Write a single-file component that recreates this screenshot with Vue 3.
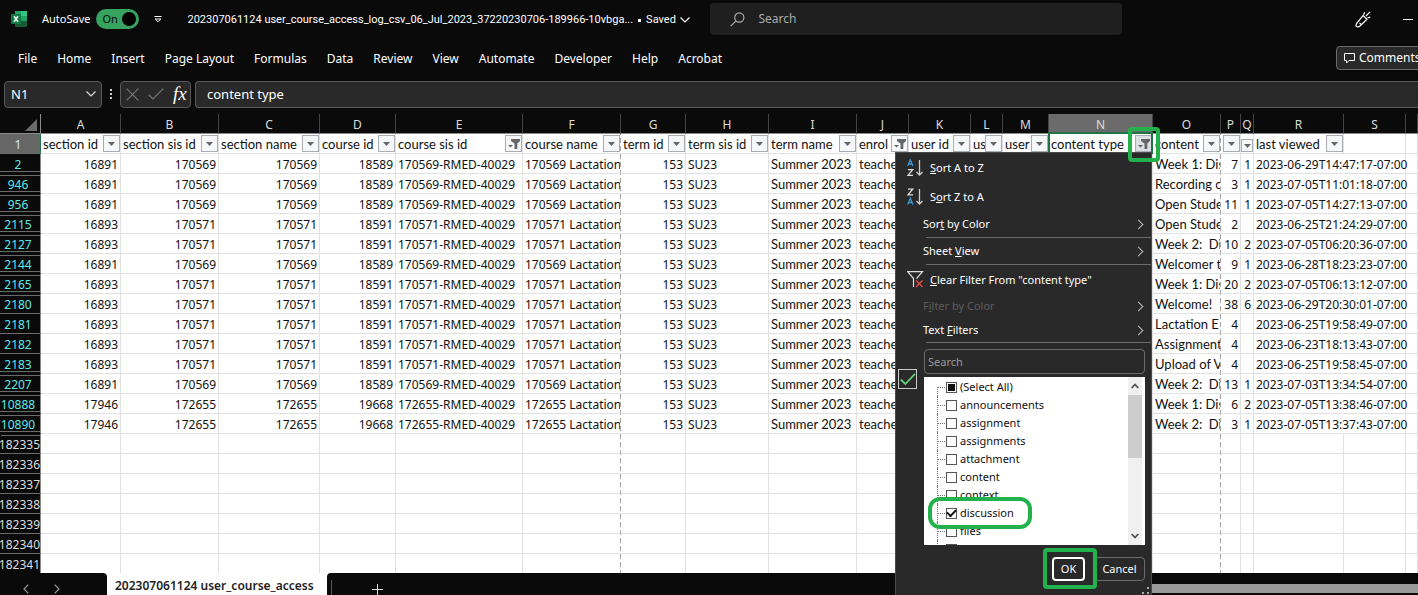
<script setup>
import { ref } from 'vue'

const tabs = ['File', 'Home', 'Insert', 'Page Layout', 'Formulas', 'Data', 'Review', 'View', 'Automate', 'Developer', 'Help', 'Acrobat']

const columns = [
  { id: 'A', label: 'section id', menu: 'arrow', num: true },
  { id: 'B', label: 'section sis id', menu: 'arrow', num: true },
  { id: 'C', label: 'section name', menu: 'arrow', num: true },
  { id: 'D', label: 'course id', menu: 'arrow', num: true },
  { id: 'E', label: 'course sis id', menu: 'filter', code: true },
  { id: 'F', label: 'course name', menu: 'arrow', code: true },
  { id: 'G', label: 'term id', menu: 'arrow', num: true },
  { id: 'H', label: 'term sis id', menu: 'arrow', code: true },
  { id: 'I', label: 'term name', menu: 'arrow' },
  { id: 'J', label: 'enrol', menu: 'filter' },
  { id: 'K', label: 'user id', menu: 'arrow', num: true },
  { id: 'L', label: 'us', menu: 'arrow' },
  { id: 'M', label: 'user', menu: 'arrow' },
  { id: 'N', label: 'content type', menu: 'filter' },
  { id: 'O', label: 'content', menu: 'arrow' },
  { id: 'P', label: 't', menu: 'arrow', num: true },
  { id: 'Q', label: '', menu: 'arrow', num: true },
  { id: 'R', label: 'last viewed', menu: 'arrow', code: true },
  { id: 'S', label: '' },
  { id: 'T', label: '' },
]

const a = ['16891', '170569', '18589', '170569-RMED-40029', '170569 Lactation']
const b = ['16893', '170571', '18591', '170571-RMED-40029', '170571 Lactation']
const c = ['17946', '172655', '19668', '172655-RMED-40029', '172655 Lactation']

const records = [
  ['2', a, 'Week 1: Dis', '7', '1', '2023-06-29T14:47:17-07:00', true],
  ['946', a, 'Recording o', '3', '1', '2023-07-05T11:01:18-07:00', true],
  ['956', a, 'Open Stude', '11', '1', '2023-07-05T14:27:13-07:00', true],
  ['2115', b, 'Open Stude', '2', '', '2023-06-25T21:24:29-07:00', true],
  ['2127', b, 'Week 2:\u00a0 Di', '10', '2', '2023-07-05T06:20:36-07:00', true],
  ['2144', a, 'Welcomer t', '9', '1', '2023-06-28T18:23:23-07:00', true],
  ['2165', b, 'Week 1: Dis', '20', '2', '2023-07-05T06:13:12-07:00', true],
  ['2180', b, 'Welcome!', '38', '6', '2023-06-29T20:30:01-07:00', false],
  ['2181', b, 'Lactation E', '4', '', '2023-06-25T19:58:49-07:00', false],
  ['2182', b, 'Assignment', '4', '', '2023-06-23T18:13:43-07:00', false],
  ['2183', b, 'Upload of V', '4', '', '2023-06-25T19:58:45-07:00', true],
  ['2207', a, 'Week 2:\u00a0 Di', '13', '1', '2023-07-03T13:34:54-07:00', true],
  ['10888', c, 'Week 1: Dis', '6', '2', '2023-07-05T13:38:46-07:00', true],
  ['10890', c, 'Week 2:\u00a0 Di', '3', '1', '2023-07-05T13:37:43-07:00', true],
]

const rows = records.map(([n, s, title, p, q, viewed, gap], i) => ({
  n,
  gap,
  afterGap: i > 0 && records[i - 1][6],
  cells: [s[0], s[1], s[1], s[2], s[3], s[4], '153', 'SU23', 'Summer 2023', 'teache', '', '', '', '', title, p, q, viewed, '', ''],
}))

const emptyRows = ['182335', '182336', '182337', '182338', '182339', '182340', '182341']

const autosave = ref(true)
const options = ref([
  { label: '(Select All)', on: false, mixed: true },
  { label: 'announcements', on: false },
  { label: 'assignment', on: false },
  { label: 'assignments', on: false },
  { label: 'attachment', on: false },
  { label: 'content', on: false },
  { label: 'context', on: false },
  { label: 'discussion', on: true },
  { label: 'files', on: false },
  { label: '', on: false },
])
</script>

<template>
  <div class="app">
    <header class="titlebar">
      <svg class="logo" width="16" height="16" viewBox="0 0 16 16" aria-hidden="true">
        <rect x="4" y="0" width="12" height="16" rx="1" fill="#185c37" />
        <rect x="4" y="0" width="6" height="5" fill="#21a366" />
        <rect x="10" y="0" width="6" height="5" fill="#33c481" />
        <rect x="4" y="5" width="6" height="5" fill="#107c41" />
        <rect x="10" y="5" width="6" height="5" fill="#21a366" />
        <rect x="0" y="3" width="10" height="10" rx="1" fill="#107c41" />
        <path d="M3 5.3 L7 10.7 M7 5.3 L3 10.7" stroke="#fff" stroke-width="1.5" />
      </svg>
      <label class="autosave">
        <span>AutoSave</span>
        <span class="switch"><input v-model="autosave" type="checkbox" /><span class="on">On</span><span class="knob"></span></span>
      </label>
      <button class="plain customize" aria-label="Customize Quick Access Toolbar">
        <svg width="8" height="8" viewBox="0 0 8 8"><path d="M0.5 1.5 H7.5" stroke="#fff" /><path d="M1.2 4 L4 6.8 L6.8 4 Z" fill="none" stroke="#fff" /></svg>
      </button>
      <button class="plain filename">
        <span>202307061124 user_course_access_log_csv_06_Jul_2023_37220230706-189966-10vbga...</span>
        <span class="bullet"></span>
        <span>Saved</span>
        <svg width="10" height="6" viewBox="0 0 10 6"><path d="M0.5 0.5 L5 5 L9.5 0.5" fill="none" stroke="#fff" stroke-width="1.2" /></svg>
      </button>
      <label class="search">
        <svg width="15" height="15" viewBox="0 0 15 15"><circle cx="9.3" cy="5.5" r="4.6" fill="none" stroke="#aaa" stroke-width="1.2" /><path d="M6 8.8 L0.7 14.2" stroke="#aaa" stroke-width="1.2" /></svg>
        <input type="text" placeholder="Search" aria-label="Search" />
      </label>
      <button class="plain pen" aria-label="What's new">
        <svg width="16" height="17" viewBox="0 0 16 17" fill="none" stroke="#fff" stroke-width="1.2">
          <path d="M8 4.5 L12 8.2 L5 15 C3.6 16.2 1.6 16 0.9 15 L1.5 12.5 Z" />
          <path d="M4.5 12 L6.5 13.7" />
          <path d="M8.6 3.8 L9.6 1.2 M11 5 L15 0.8 M12.4 7 L15.3 6.2" />
        </svg>
      </button>
      <button class="plain minimize" aria-label="Minimize"></button>
    </header>

    <nav class="ribbon">
      <button v-for="tab in tabs" :key="tab" class="plain tab">{{ tab }}</button>
      <button class="comments">
        <svg width="11" height="11" viewBox="0 0 11 11"><path d="M0.5 0.5 H10.5 V7.5 H5 L2.5 10 V7.5 H0.5 Z" fill="none" stroke="#fff" /></svg>
        <span>Comments</span>
      </button>
    </nav>

    <div class="formula">
      <button class="box namebox">
        <span>N1</span>
        <svg width="10" height="6" viewBox="0 0 10 6"><path d="M0.5 0.5 L5 5 L9.5 0.5" fill="none" stroke="#ddd" stroke-width="1.2" /></svg>
      </button>
      <svg class="grip" width="2" height="11" viewBox="0 0 2 11" fill="#ccc"><path d="M0 0h2v2H0zM0 4h2v2H0zM0 8h2v2H0z" /></svg>
      <div class="box tools">
        <button class="plain" aria-label="Cancel entry"><svg width="13" height="13" viewBox="0 0 13 13"><path d="M0.7 0.7 L12.3 12.3 M12.3 0.7 L0.7 12.3" stroke="#777" stroke-width="1.2" /></svg></button>
        <button class="plain" aria-label="Enter"><svg width="16" height="12" viewBox="0 0 16 12"><path d="M0.7 6.8 L5 11 L15.3 0.7" fill="none" stroke="#777" stroke-width="1.2" /></svg></button>
        <button class="plain fx" aria-label="Insert function">fx</button>
      </div>
      <input class="box entry" type="text" value="content type" aria-label="Formula bar" />
    </div>

    <main class="sheet">
      <table>
        <colgroup>
          <col class="w-head" />
          <col v-for="col in columns" :key="col.id" :class="['w-' + col.id, { pagebreak: col.id === 'F' || col.id === 'O' }]" />
        </colgroup>
        <thead>
          <tr>
            <th class="corner"><svg width="12" height="12" viewBox="0 0 12 12"><path d="M12 0 V12 H0 Z" fill="#6b6b6b" /></svg></th>
            <th v-for="col in columns" :key="col.id" class="letter" :class="{ picked: col.id === 'N' }">{{ col.id === 'T' ? '' : col.id }}</th>
          </tr>
        </thead>
        <tbody>
          <tr>
            <th class="rowhead current">1</th>
            <td v-for="col in columns" :key="col.id" class="field" :class="{ active: col.id === 'N', broken: col.id === 'F' || col.id === 'O' }">
              <div class="field-row">
                <span class="field-label">{{ col.label }}</span>
                <button v-if="col.menu" class="drop" :class="{ small: col.id === 'Q' }" :aria-label="'Filter ' + col.label">
                  <svg v-if="col.menu === 'arrow'" width="7" height="4" viewBox="0 0 7 4"><path d="M0 0 H7 L3.5 4 Z" fill="#666" /></svg>
                  <svg v-else width="12" height="10" viewBox="0 0 12 10" fill="#666"><path d="M3 0 H12 V2 L9.3 4.5 V10 H6.5 V4.5 L3 2 Z" /><path d="M0 6 H5 L2.5 8.6 Z" /></svg>
                </button>
              </div>

              <template v-if="col.id === 'N'">
                <span class="cell-outline"></span>
                <span class="mark mark-filter"></span>
                <section class="menu" aria-label="Column filter">
                  <button class="item tall">
                    <svg width="17" height="18" viewBox="0 0 17 18" fill="none" stroke-width="1.3">
                      <path d="M0.7 7 L3.3 0.8 L5.9 7 M1.6 5 H5" stroke="#3a96dd" />
                      <path d="M1 10.7 H5.7 L1 16.3 H6" stroke="#ddd" />
                      <path d="M12.5 1 V16 M9.5 13 L12.5 16 L15.5 13" stroke="#ccc" />
                    </svg>
                    <span><u>S</u>ort A to Z</span>
                  </button>
                  <button class="item tall">
                    <svg width="17" height="18" viewBox="0 0 17 18" fill="none" stroke-width="1.3">
                      <path d="M1 1.2 H5.7 L1 6.8 H6" stroke="#ddd" />
                      <path d="M0.7 16.5 L3.3 10.3 L5.9 16.5 M1.6 14.5 H5" stroke="#3a96dd" />
                      <path d="M12.5 1 V16 M9.5 13 L12.5 16 L15.5 13" stroke="#ccc" />
                    </svg>
                    <span>S<u>o</u>rt Z to A</span>
                  </button>
                  <button class="item sub"><span>Sor<u>t</u> by Color</span><i class="chev"></i></button>
                  <hr />
                  <button class="item sub"><span>Sheet <u>V</u>iew</span><i class="chev"></i></button>
                  <hr />
                  <button class="item tall">
                    <svg width="17" height="17" viewBox="0 0 17 17" fill="none">
                      <path d="M6.5 16 V7.5 L0.7 0.7 H15.5 L10 7 V8" stroke="#ddd" stroke-width="1.2" />
                      <path d="M9 9.5 L15.5 16 M15.5 9.5 L9 16" stroke="#e0504c" stroke-width="1.3" />
                    </svg>
                    <span><u>C</u>lear Filter From "content type"</span>
                  </button>
                  <button class="item sub short" disabled><span>F<u>i</u>lter by Color</span><i class="chev"></i></button>
                  <button class="item sub short"><span>Text <u>F</u>ilters</span><i class="chev"></i></button>
                  <hr />
                  <div class="values">
                    <span class="checked-icon"><svg width="16" height="13" viewBox="0 0 16 13"><path d="M0.8 6.5 L5.3 11 L15 0.9" fill="none" stroke="#5fd07a" stroke-width="1.8" /></svg></span>
                    <input class="find" type="text" placeholder="Search" aria-label="Search values" />
                    <div class="listbox">
                      <ul>
                        <li v-for="o in options" :key="o.label">
                          <label><input v-model="o.on" type="checkbox" :class="{ mixed: o.mixed }" />{{ o.label }}</label>
                          <span v-if="o.label === 'discussion'" class="mark mark-option"></span>
                        </li>
                      </ul>
                      <div class="scroll">
                        <svg width="8" height="6" viewBox="0 0 8 6"><path d="M0.7 5 L4 1.5 L7.3 5" fill="none" stroke="#505050" stroke-width="1.8" /></svg>
                        <div class="thumb"></div>
                        <svg width="8" height="6" viewBox="0 0 8 6"><path d="M0.7 1 L4 4.5 L7.3 1" fill="none" stroke="#505050" stroke-width="1.8" /></svg>
                      </div>
                    </div>
                  </div>
                  <div class="actions">
                    <span class="ok-wrap"><button class="ok">OK</button><span class="mark mark-ok"></span></span>
                    <button class="cancel">Cancel</button>
                  </div>
                  <svg class="resize" width="8" height="8" viewBox="0 0 8 8" fill="#aaa"><path d="M5 0h2v2H5zM5 5h2v2H5zM0 5h2v2H0z" /></svg>
                </section>
              </template>
            </td>
          </tr>
          <tr v-for="row in rows" :key="row.n">
            <th class="rowhead filtered" :class="{ gap: row.gap, 'after-gap': row.afterGap }">{{ row.n }}</th>
            <td
              v-for="(cell, i) in row.cells"
              :key="i"
              :class="{ num: columns[i].num, code: columns[i].code, spill: columns[i].id === 'R', broken: columns[i].id === 'F' || columns[i].id === 'O' }"
            >{{ cell }}</td>
          </tr>
          <tr v-for="(n, i) in emptyRows" :key="n">
            <th class="rowhead long" :class="{ 'after-gap': i === 0 }">{{ n }}</th>
            <td v-for="col in columns" :key="col.id" :class="{ broken: col.id === 'F' || col.id === 'O' }"></td>
          </tr>
        </tbody>
      </table>
    </main>

    <footer class="sheetbar">
      <div class="nav">
        <button class="plain" aria-label="Previous sheet"><svg width="6" height="10" viewBox="0 0 6 10"><path d="M5.3 0.7 L1 5 L5.3 9.3" fill="none" stroke="#999" stroke-width="1.2" /></svg></button>
        <button class="plain" aria-label="Next sheet"><svg width="6" height="10" viewBox="0 0 6 10"><path d="M0.7 0.7 L5 5 L0.7 9.3" fill="none" stroke="#999" stroke-width="1.2" /></svg></button>
      </div>
      <button class="sheettab">202307061124 user_course_access</button>
      <div class="rest">
        <span class="divider"></span>
        <button class="plain add" aria-label="New sheet"><svg width="11" height="11" viewBox="0 0 11 11"><path d="M5.5 0 V11 M0 5.5 H11" stroke="#ddd" /></svg></button>
        <div class="hscroll"></div>
      </div>
    </footer>
  </div>
</template>

<style>
html,
body {
  margin: 0;
  background: #0a0a0a;
}
</style>

<style scoped>
.app {
  --ui: "Noto Sans", "Open Sans", sans-serif;
  --cell: Lato, "Noto Sans", sans-serif;
  display: flex;
  flex-direction: column;
  height: 100vh;
  overflow: hidden;
  background: #0a0a0a;
  color: #fff;
  font-family: var(--ui);
  font-size: 12px;
  line-height: 16px;
}
.app * {
  box-sizing: border-box;
}
button,
input {
  font: inherit;
  color: inherit;
  margin: 0;
}
svg {
  display: block;
  flex: none;
}
.plain {
  border: 0;
  padding: 0;
  background: none;
  white-space: nowrap;
}

.titlebar {
  display: flex;
  align-items: center;
  height: 38px;
  flex: none;
  padding-left: 11px;
}
.autosave {
  display: flex;
  align-items: center;
  gap: 6px;
  margin-left: 15px;
  font-size: 11px;
}
.switch {
  display: flex;
  align-items: center;
  justify-content: space-between;
  width: 43px;
  height: 20px;
  padding: 0 3px 0 6px;
  border-radius: 10px;
  background: #36a35f;
  color: #0a0a0a;
}
.switch input {
  appearance: none;
  position: absolute;
  width: 0;
  height: 0;
}
.knob {
  width: 14px;
  height: 14px;
  border-radius: 50%;
  background: #000;
}
.customize {
  margin-left: 15px;
}
.filename {
  display: flex;
  align-items: center;
  width: 490px;
  margin-left: 25px;
  padding-top: 1px;
  font-family: Roboto, sans-serif;
  font-size: 11px;
}
.bullet {
  flex: none;
  width: 3px;
  height: 3px;
  margin: 2px 5px 0;
  background: #fff;
}
.filename svg {
  margin-left: 4px;
}
.search {
  display: flex;
  align-items: center;
  gap: 13px;
  width: 412px;
  height: 32px;
  margin-left: 33px;
  padding-left: 20px;
  border-radius: 4px;
  background: #1f1f1f;
}
.search input {
  flex: 1;
  min-width: 0;
  border: 0;
  padding: 0;
  background: none;
}
.search input::placeholder {
  color: #aaa;
}
.pen {
  margin-left: auto;
}
.minimize {
  width: 10px;
  height: 1px;
  margin: 0 5px 0 32px;
  background: #fff;
}

.ribbon {
  display: flex;
  align-items: center;
  gap: 20px;
  height: 40px;
  flex: none;
  padding-left: 18px;
}
.tab {
  padding-top: 2px;
}
.comments {
  display: flex;
  align-items: center;
  gap: 4px;
  width: 90px;
  height: 24px;
  margin: 0 -8px 0 auto;
  padding: 0 7px;
  border: 1px solid #6b6b6b;
  border-radius: 4px;
  background: #292929;
}

.formula {
  display: flex;
  align-items: center;
  height: 36px;
  flex: none;
  padding: 3px 0 7px 4px;
  font-size: 13px;
}
.box {
  height: 27px;
  border: 1px solid #5a5a5a;
  border-radius: 4px;
  background: #292929;
}
.namebox {
  display: flex;
  align-items: center;
  justify-content: space-between;
  width: 98px;
  padding: 0 5px 0 6px;
}
.grip {
  margin: 0 8px;
}
.tools {
  display: flex;
  align-items: center;
  gap: 9px;
  width: 71px;
  padding-left: 5px;
}
.fx {
  font-family: "Liberation Serif", serif;
  font-style: italic;
  font-size: 19px;
}
.entry {
  flex: 1;
  min-width: 0;
  margin-left: 4px;
  padding: 0 11px;
  border-right: 0;
  border-radius: 4px 0 0 4px;
}

.sheet {
  flex: 1;
  min-height: 0;
  background: #fff;
}
table {
  width: 100%;
  table-layout: fixed;
  border-collapse: separate;
  border-spacing: 0;
  color: #111;
  font-family: var(--cell);
  font-size: 13px;
}
.w-head { width: 41px; }
.w-A { width: 80px; }
.w-B { width: 98px; }
.w-C { width: 101px; }
.w-D { width: 76px; }
.w-E { width: 127px; }
.w-F { width: 98px; }
.w-G { width: 65px; }
.w-H { width: 83px; }
.w-I { width: 88px; }
.w-J { width: 52px; }
.w-K { width: 62px; }
.w-L { width: 32px; }
.w-M { width: 46px; }
.w-N { width: 104px; }
.w-O { width: 68px; }
.w-P { width: 20px; }
.w-Q { width: 13px; }
.w-R { width: 90px; }
.w-S { width: 62px; }
.pagebreak {
  background: repeating-linear-gradient(#a6a6a6 0 5px, #fff 5px 8px) right / 1px 100% no-repeat;
}
th,
td {
  height: 20px;
  padding: 2px 2px 0;
  border-right: 1px solid #e1e1e1;
  border-bottom: 1px solid #e1e1e1;
  line-height: 17px;
  font-weight: 400;
  text-align: left;
  white-space: nowrap;
  overflow: hidden;
}
td.num,
td.code {
  font-family: var(--ui);
  font-size: 12px;
}
td.num {
  padding-right: 2px;
  text-align: right;
}
td.broken {
  border-right-color: transparent;
}
td.spill {
  overflow: visible;
  border-right-color: transparent;
}
.letter {
  padding: 1px 0 0;
  border-right-color: #444;
  border-bottom-color: #8a8a8a;
  background: #0a0a0a;
  color: #ddd;
  font-family: var(--ui);
  font-size: 12px;
  text-align: center;
}
.picked {
  background: #6b6b6b;
}
.corner {
  padding: 0 3px 2px 0;
  border-right-color: #8a8a8a;
  border-bottom-color: #8a8a8a;
  background: #0a0a0a;
  vertical-align: bottom;
}
.corner svg {
  margin-left: auto;
}
.rowhead {
  position: relative;
  padding: 2px 4px 0 0;
  border-right-color: #8a8a8a;
  border-bottom-color: #6b6b6b;
  background: #0a0a0a;
  color: #ddd;
  font-family: var(--ui);
  font-size: 12px;
  text-align: center;
}
.rowhead.long {
  padding: 2px 1px 0 0;
  direction: rtl;
}
.rowhead.current {
  border-right-color: #217346;
  background: #666;
  color: #cfeaff;
}
.rowhead.filtered {
  color: #5fe8e8;
}
.rowhead.gap {
  border-bottom-color: #0a0a0a;
}
.rowhead.gap::after,
.rowhead.after-gap::before {
  content: "";
  position: absolute;
  left: 0;
  right: 0;
  height: 1px;
  background: #6b6b6b;
}
.rowhead.gap::after {
  bottom: 1px;
}
.rowhead.after-gap::before {
  top: 1px;
}

.field {
  padding: 0 0 0 2px;
}
.field-row {
  display: flex;
  align-items: center;
  height: 19px;
}
.field-label {
  flex: 1 1 0;
  min-width: 0;
  padding-top: 2px;
  overflow: hidden;
}
.drop {
  display: flex;
  align-items: center;
  justify-content: center;
  flex: none;
  width: 17px;
  height: 17px;
  padding: 0;
  border: 1px solid #a9adb3;
  background: #f6f7f9;
}
.drop.small {
  align-self: flex-end;
  width: 12px;
  height: 13px;
  margin: 0 0 1px -2px;
}
.active {
  position: relative;
  overflow: visible;
}
.active .drop {
  background: #dcdfe4;
}
.cell-outline {
  position: absolute;
  inset: -2px -1px -1px -1px;
  border: 2px solid #217346;
  pointer-events: none;
}

.mark {
  position: absolute;
  z-index: 6;
  border: 4px solid #22b14c;
  pointer-events: none;
}
.mark-filter {
  top: -7px;
  right: -8px;
  width: 32px;
  height: 35px;
  border-radius: 4px;
}
.mark-option {
  top: -7px;
  left: 4px;
  width: 104px;
  height: 32px;
  border-radius: 12px;
}
.mark-ok {
  inset: -9px -12px -8px -9px;
  border-radius: 4px;
}

.menu {
  position: absolute;
  z-index: 5;
  top: 18px;
  right: 0;
  width: 257px;
  height: 446px;
  border: 1px solid #4a4a4a;
  background: #292929;
  color: #fff;
  font-family: var(--ui);
  font-size: 11px;
  line-height: 16px;
}
.item {
  display: flex;
  align-items: center;
  width: 100%;
  height: 26px;
  padding: 0 9px 0 27px;
  border: 0;
  background: none;
  text-align: left;
}
.item.tall {
  height: 29px;
  gap: 6px;
  padding-left: 11px;
}
.item.short {
  height: 24px;
}
.item:disabled {
  color: #5c5c5c;
}
.chev {
  width: 7px;
  height: 7px;
  margin-left: auto;
  border: solid #bbb;
  border-width: 1px 1px 0 0;
  transform: rotate(45deg);
}
hr {
  height: 1px;
  margin: 0 0 0 30px;
  border: 0;
  background: #6b6b6b;
}
.values {
  position: relative;
  padding: 6px 6px 0 28px;
}
.checked-icon {
  position: absolute;
  left: 2px;
  top: 26px;
  display: grid;
  place-items: center;
  width: 19px;
  height: 20px;
  border: 1px solid #ccc;
}
.find {
  display: block;
  width: 100%;
  height: 25px;
  padding: 0 3px;
  border: 1px solid #6b6b6b;
  border-radius: 4px;
  background: #292929;
}
.find::placeholder {
  color: #999;
}
.listbox {
  display: flex;
  height: 168px;
  margin-top: 3px;
  overflow: hidden;
  background: #fff;
  color: #111;
}
ul {
  flex: 1;
  margin: 0;
  padding: 1px 0 0;
  list-style: none;
}
li {
  position: relative;
  height: 18px;
}
li::before {
  content: "";
  position: absolute;
  left: 13px;
  top: 0;
  height: 18px;
  border-left: 1px dotted #777;
}
li:first-child::before {
  top: 9px;
  height: 9px;
}
li::after {
  content: "";
  position: absolute;
  left: 13px;
  top: 9px;
  width: 8px;
  border-top: 1px dotted #777;
}
li label {
  display: flex;
  align-items: center;
  gap: 3px;
  height: 18px;
  padding-left: 22px;
}
li input {
  appearance: none;
  display: grid;
  place-items: center;
  width: 11px;
  height: 11px;
  border: 1px solid #555;
  background: #fff;
}
li input:checked::before {
  content: "";
  width: 7px;
  height: 4px;
  margin-top: -2px;
  border: solid #111;
  border-width: 0 0 2px 2px;
  transform: rotate(-45deg);
}
li input.mixed::before {
  content: "";
  width: 7px;
  height: 7px;
  background: #111;
}
.scroll {
  display: flex;
  flex-direction: column;
  align-items: center;
  width: 14px;
  margin-right: 3px;
  padding: 6px 0;
  background: #f0f0f0;
}
.thumb {
  width: 14px;
  height: 63px;
  margin: 6px 0 auto;
  background: #cdcdcd;
}
.actions {
  display: flex;
  justify-content: flex-end;
  gap: 9px;
  padding: 12px 6px 0 0;
}
.ok-wrap {
  position: relative;
}
.ok,
.cancel {
  display: block;
  height: 24px;
  padding: 0;
  border-radius: 4px;
  background: #292929;
}
.ok {
  width: 33px;
  border: 2px solid #fff;
}
.cancel {
  width: 51px;
  border: 1px solid #6b6b6b;
}
.resize {
  position: absolute;
  right: 1px;
  top: 434px;
}

.sheetbar {
  position: relative;
  z-index: 1;
  display: flex;
  height: 22px;
  flex: none;
  background: #fff;
}
.nav {
  display: flex;
  gap: 25px;
  width: 107px;
  padding: 10px 0 0 23px;
  border-radius: 0 4px 0 0;
  background: #0a0a0a;
}
.nav svg {
  height: 10px;
}
.sheettab {
  width: 220px;
  padding: 0 8px;
  border: 0;
  background: #fff;
  color: #222;
  font-weight: 600;
  line-height: 26px;
  text-align: left;
  white-space: nowrap;
}
.rest {
  display: flex;
  flex: 1;
  border-radius: 4px 0 0 0;
  background: #0a0a0a;
}
.divider {
  width: 1px;
  margin: 7px 40px 0 4px;
  background: #555;
}
.add {
  padding-top: 10px;
}
.hscroll {
  width: 267px;
  height: 9px;
  margin: 11px 0 0 auto;
  background: #999;
}
</style>
